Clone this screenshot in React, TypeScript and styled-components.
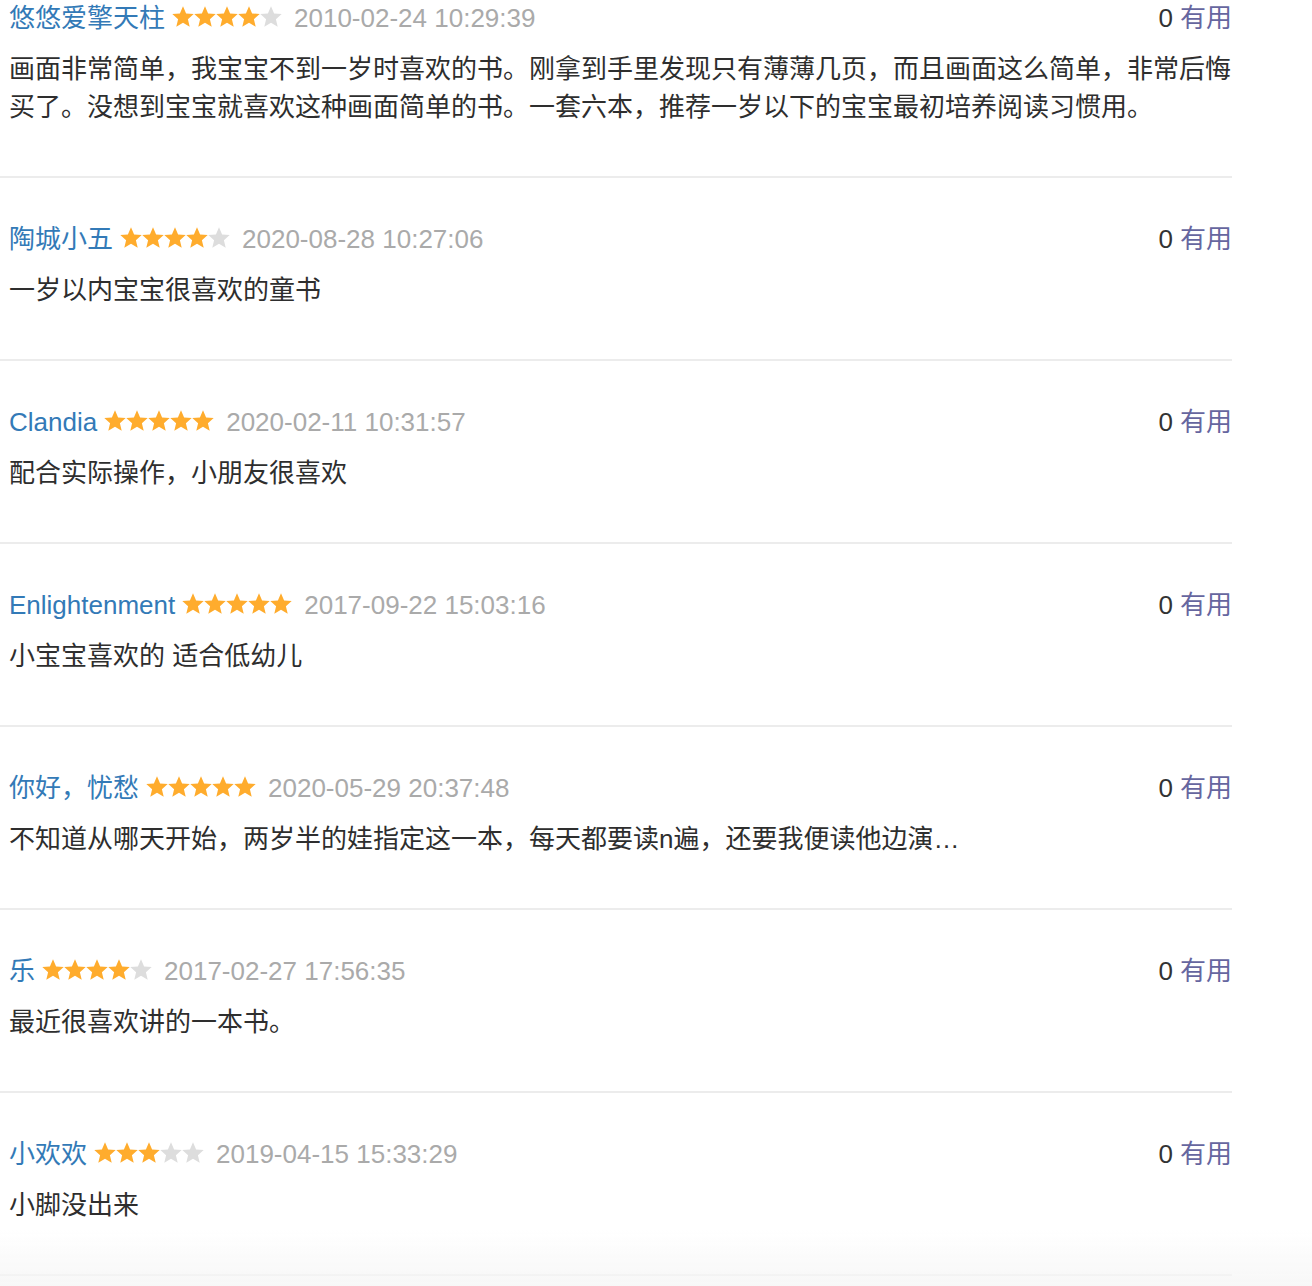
import React from "react";
import styled, { createGlobalStyle } from "styled-components";

const GlobalStyle = createGlobalStyle`
  html, body {
    margin: 0;
    padding: 0;
    background: #ffffff;
  }
  body {
    font-family: "Liberation Sans", "Noto Sans CJK SC", sans-serif;
    -webkit-font-smoothing: antialiased;
  }
`;

const Page = styled.div`
  width: 1312px;
  min-height: 1286px;
  box-sizing: border-box;
  position: relative;
`;

const List = styled.ul`
  list-style: none;
  margin: 0;
  padding: 0;
  width: 1232px;
`;

const Item = styled.li<{ $first?: boolean }>`
  display: flex;
  flex-direction: column;
  gap: 14px;
  padding: ${(p) => (p.$first ? "0" : "43px")} 0 50px 9px;
  border-bottom: 2px solid #ececec;
`;

const Header = styled.div`
  display: flex;
  align-items: center;
  height: 36px;
  font-size: 26px;
  line-height: 36px;
  white-space: nowrap;
`;

const Name = styled.a`
  color: #337ab7;
  text-decoration: none;
  margin-right: 7px;
`;

const Stars = styled.span`
  display: inline-flex;
  align-items: center;
  margin-right: 12px;
  margin-top: -3px;
`;

const Date = styled.span`
  color: #aaaaaa;
`;

const Useful = styled.span`
  margin-left: auto;
  color: #333333;
`;

const UsefulLabel = styled.span`
  color: #66669f;
  margin-left: 7px;
`;

const Body = styled.p`
  margin: 0;
  font-size: 26px;
  line-height: 38px;
  color: #2e2e2e;
`;

const BottomFade = styled.div`
  position: fixed;
  left: 0;
  right: 0;
  bottom: 0;
  height: 56px;
  pointer-events: none;
  background: linear-gradient(to bottom, rgba(246, 246, 246, 0), rgba(246, 246, 246, 0.85));
`;

const Star: React.FC<{ on: boolean }> = ({ on }) => (
  <svg width="22" height="21" viewBox="1 1.2 22 21">
    <path
      d="M12 1.5l3.1 7.1 7.6.7-5.8 5.1 1.8 7.6L12 18l-6.7 4 1.8-7.6-5.8-5.1 7.6-.7z"
      fill={on ? "#ffac2d" : "#dddddd"}
    />
  </svg>
);

type Review = { name: string; stars: number; date: string; text: string };

const reviews: Review[] = [
  {
    name: "悠悠爱擎天柱",
    stars: 4,
    date: "2010-02-24 10:29:39",
    text: "画面非常简单，我宝宝不到一岁时喜欢的书。刚拿到手里发现只有薄薄几页，而且画面这么简单，非常后悔买了。没想到宝宝就喜欢这种画面简单的书。一套六本，推荐一岁以下的宝宝最初培养阅读习惯用。",
  },
  { name: "陶城小五", stars: 4, date: "2020-08-28 10:27:06", text: "一岁以内宝宝很喜欢的童书" },
  { name: "Clandia", stars: 5, date: "2020-02-11 10:31:57", text: "配合实际操作，小朋友很喜欢" },
  { name: "Enlightenment", stars: 5, date: "2017-09-22 15:03:16", text: "小宝宝喜欢的 适合低幼儿" },
  {
    name: "你好，忧愁",
    stars: 5,
    date: "2020-05-29 20:37:48",
    text: "不知道从哪天开始，两岁半的娃指定这一本，每天都要读n遍，还要我便读他边演…",
  },
  { name: "乐", stars: 4, date: "2017-02-27 17:56:35", text: "最近很喜欢讲的一本书。" },
  { name: "小欢欢", stars: 3, date: "2019-04-15 15:33:29", text: "小脚没出来" },
];

export default function App() {
  return (
    <Page>
      <GlobalStyle />
      <List>
        {reviews.map((r, i) => (
          <Item key={i} $first={i === 0}>
            <Header>
              <Name href="#">{r.name}</Name>
              <Stars>
                {[0, 1, 2, 3, 4].map((s) => (
                  <Star key={s} on={s < r.stars} />
                ))}
              </Stars>
              <Date>{r.date}</Date>
              <Useful>
                0<UsefulLabel>有用</UsefulLabel>
              </Useful>
            </Header>
            <Body>{r.text}</Body>
          </Item>
        ))}
      </List>
      <BottomFade />
    </Page>
  );
}
